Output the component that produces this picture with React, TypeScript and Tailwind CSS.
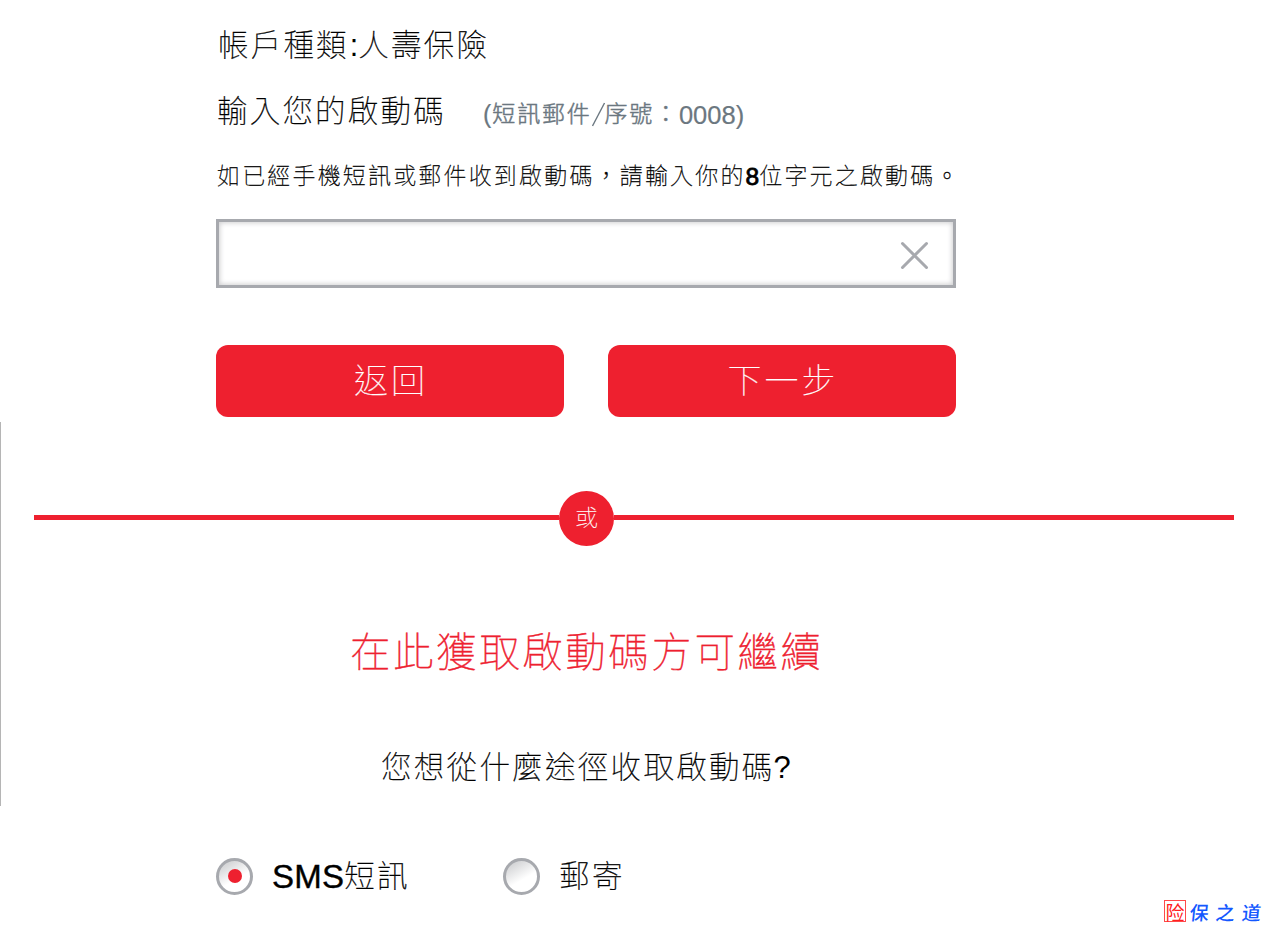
import React, { useState } from "react";

const font =
  "font-['Liberation_Sans','Noto_Sans_CJK_TC',sans-serif] font-thin [-webkit-text-stroke:0.3px_currentColor]";

function ActionButton({ children }: { children: React.ReactNode }) {
  return (
    <button
      type="button"
      className="flex h-[72px] w-[348px] items-center justify-center rounded-[12px] bg-[#ee202f] pl-[2px] text-[34px] tracking-[3px] text-white [-webkit-text-stroke:0.2px_currentColor]"
    >
      {children}
    </button>
  );
}

function Radio({ checked, onSelect, children }: { checked: boolean; onSelect: () => void; children: React.ReactNode }) {
  return (
    <button type="button" role="radio" aria-checked={checked} onClick={onSelect} className="flex items-center">
      <span className="flex size-[37px] items-center justify-center rounded-full border-[3px] border-[#a7a9ae] bg-linear-[150deg,#d2d3d5_12%,#ffffff_58%]">
        {checked && <span className="size-[14px] rounded-full bg-[#ee202f]" />}
      </span>
      {children}
    </button>
  );
}

export default function App() {
  const [channel, setChannel] = useState("sms");
  const [code, setCode] = useState("");

  return (
    <div className={`relative h-[928px] w-[1268px] overflow-hidden bg-white text-black ${font}`}>
      <div className="absolute top-[422px] left-0 h-[384px] w-px bg-[#b5b5b5]" />

      <main className="flex flex-col">
        <section className="ml-[216px] flex w-[744px] flex-col whitespace-nowrap">
          <h1 className="mt-[26px] flex h-10 items-center pl-[2px] text-[30.5px] tracking-[2.2px]">
            <span>帳戶種類</span>
            <span className="ml-px tracking-normal [-webkit-text-stroke:0]">:</span>
            <span>人壽保險</span>
          </h1>
          <div className="mt-[26px] flex h-10 items-center">
            <h2 className="w-[267px] pl-px text-[30.5px] tracking-[2.2px]">輸入您的啟動碼</h2>
            <p className="flex items-center pt-[4px] text-[23px] font-light tracking-[1.8px] text-[#6b7780] [-webkit-text-stroke:0.5px_currentColor]">
              <span className="pt-px text-[25px] tracking-normal [-webkit-text-stroke:0.2px_currentColor]">(</span>
              <span className="ml-px">短訊郵件</span>
              <svg className="h-[25px] w-[13px]" viewBox="0 0 13 25" fill="none" stroke="currentColor">
                <path d="M0.5 24 12.5 1" strokeWidth="1.4" />
              </svg>
              <span>序號：</span>
              <span className="pt-[2px] text-[25.5px] tracking-normal [-webkit-text-stroke:0.2px_currentColor]">0008)</span>
            </p>
          </div>
          <p className="mt-[28px] flex h-8 items-center pl-px text-[23px] tracking-[2.17px]">
            <span>如已經手機短訊或郵件收到啟動碼，請輸入你的</span>
            <span className="pt-[2px] text-[24.5px] tracking-normal [-webkit-text-stroke:0.8px_currentColor]">8</span>
            <span>位字元之啟動碼。</span>
          </p>

          <div className="mt-[27px] flex h-[69px] w-[740px] items-center border-[3px] border-[#a7a9ae] pr-[24px] shadow-[inset_0_0_5px_1px_#cfcfd1]">
            <input
              value={code}
              onChange={(e) => setCode(e.target.value)}
              className="min-w-0 flex-1 bg-transparent px-4 text-2xl outline-none"
            />
            <button type="button" onClick={() => setCode("")} className="mt-[3px]">
              <svg className="size-[29px]" viewBox="0 0 29 29" fill="none" stroke="#a7a9ae" strokeWidth="3" strokeLinecap="round">
                <path d="M2.5 2.5 26.5 26.5M26.5 2.5 2.5 26.5" />
              </svg>
            </button>
          </div>

          <div className="mt-[57px] flex w-[740px] justify-between">
            <ActionButton>返回</ActionButton>
            <ActionButton>下一步</ActionButton>
          </div>
        </section>

        <div className="mt-[73px] ml-[34px] flex h-[56px] w-[1200px] items-center">
          <div className="-mt-[2px] h-[5px] w-[525px] bg-[#ee202f]" />
          <div className="flex size-[55px] items-center justify-center rounded-full bg-[#ee202f] text-[23px] text-white [-webkit-text-stroke:0.15px_currentColor]">或</div>
          <div className="-mt-[2px] h-[5px] flex-1 bg-[#ee202f]" />
        </div>

        <section className="ml-[216px] flex w-[740px] flex-col whitespace-nowrap">
          <h2 className="mt-[77px] flex h-[60px] items-center pl-[134px] text-[40.5px] tracking-[2.55px] text-[#ee202f] [-webkit-text-stroke:0.4px_currentColor]">
            在此獲取啟動碼方可繼續
          </h2>
          <p className="mt-[65px] flex h-10 items-center pl-[165px] text-[30.5px] tracking-[2.3px]">
            <span>您想從什麼途徑收取啟動碼</span>
            <span className="-ml-px pt-px text-[31px] tracking-normal [-webkit-text-stroke:0]">?</span>
          </p>
          <div className="mt-[65px] flex h-[46px] items-center" role="radiogroup">
            <Radio checked={channel === "sms"} onSelect={() => setChannel("sms")}>
              <span className="ml-[19px] flex w-[231px] items-center text-left text-[30.5px] tracking-[2.5px]">
                <span className="pt-[2px] text-[33px] tracking-[0.2px] [-webkit-text-stroke:0.4px_currentColor]">SMS</span>
                <span className="pt-[2px]">短訊</span>
              </span>
            </Radio>
            <Radio checked={channel === "mail"} onSelect={() => setChannel("mail")}>
              <span className="ml-[19px] pt-[2px] text-[30.5px] tracking-[2.5px]">郵寄</span>
            </Radio>
          </div>
        </section>
      </main>

      <div className="absolute top-[900px] left-[1164px] flex items-center [-webkit-text-stroke:0]">
        <span className="flex size-[22px] items-center justify-center border border-[#ff4a4a] font-['Noto_Sans_CJK_SC',sans-serif] text-[19px] leading-none font-normal text-[#ff2020]">
          险
        </span>
        <span className="ml-[4px] flex -skew-x-6 gap-[7px] font-['Noto_Sans_CJK_SC',sans-serif] text-[19px] leading-none font-medium text-[#1458ff]">
          <span>保</span>
          <span>之</span>
          <span>道</span>
        </span>
      </div>
    </div>
  );
}
